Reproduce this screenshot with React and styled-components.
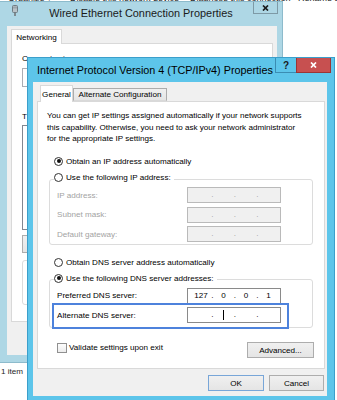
import React from 'react';
import styled, { createGlobalStyle } from 'styled-components';

const UI = '"Liberation Sans", Arial, sans-serif';

const Global = createGlobalStyle`
  html, body { margin: 0; padding: 0; background: #fff; }
  body { font-family: ${UI}; }
  #root { width: 337px; height: 400px; }
  * { box-sizing: border-box; }
`;

const Desktop = styled.div`
  position: relative;
  width: 337px;
  height: 400px;
  overflow: hidden;
  background: #fff;
  font-family: ${UI};
  font-size: 8.1px;
  color: #000;
  display: flex;
  flex-direction: column;
`;

/* ---------- explorer behind ---------- */
const ExplorerToolbar = styled.div`
  display: flex;
  align-items: flex-end;
  height: 4px;
  padding-left: 8px;
  font-size: 9px;
  line-height: 11px;
  color: #1e1e1e;
  white-space: nowrap;
`;
const ToolItem = styled.span`
  flex: none;
  width: ${(p) => (p.$w ? `${p.$w}px` : 'auto')};
`;
const StatusBar = styled.div`
  margin-top: auto;
  height: 34px;
  padding-left: 1px;
  line-height: 12px;
  color: #1e1e1e;
`;

/* ---------- generic parts ---------- */
const Button = styled.div`
  width: ${(p) => p.$w}px;
  height: ${(p) => p.$h || 16}px;
  flex: none;
  display: flex;
  align-items: center;
  justify-content: center;
  background: linear-gradient(#f0f0f0, #e5e5e5);
  border: 1px solid ${(p) => (p.$default ? '#78a6d8' : '#adadad')};
  color: #000;
  white-space: nowrap;
`;

const Tab = styled.div`
  position: relative;
  z-index: ${(p) => (p.$active ? 1 : 0)};
  width: ${(p) => p.$w}px;
  height: ${(p) => p.$h}px;
  margin-bottom: ${(p) => (p.$active ? -1 : 0)}px;
  flex: none;
  display: flex;
  align-items: center;
  justify-content: center;
  background: ${(p) => (p.$active ? '#fff' : 'linear-gradient(#f0f0f0, #e5e5e5)')};
  border: 1px solid ${(p) => (p.$active ? '#d9d9d9' : '#acacac')};
  border-bottom: ${(p) => (p.$active ? 'none' : '1px solid #d9d9d9')};
  white-space: nowrap;
`;

/* ---------- back window ---------- */
const BackWindow = styled.div`
  position: absolute;
  left: -1px;
  top: 1px;
  width: 284px;
  height: 362px;
  border: 1px solid #8dbbcc;
  background: #aed7e5;
  display: flex;
  flex-direction: column;
`;
const BackTitleBar = styled.div`
  height: 24px;
  flex: none;
  display: grid;
  grid-template-columns: 1fr auto 1fr;
  align-items: start;
  padding: 0 4px;
`;
const TitleIcon = styled.svg`
  margin: 3px 0 0 8px;
  display: block;
`;
const BackTitle = styled.div`
  line-height: 22px;
  font-size: 10.9px;
  color: #1a1a1a;
  white-space: nowrap;
`;
const BackClose = styled.div`
  justify-self: end;
  width: 25px;
  height: 12px;
  border: 1px solid #7e9aa6;
  border-top: none;
  display: flex;
  align-items: center;
  justify-content: center;
`;
const BackClient = styled.div`
  margin: 0 5px 0 7px;
  height: 329px;
  flex: none;
  background: #f0f0f0;
  padding: 3px 4px 0 4px;
  display: flex;
  flex-direction: column;
`;
const TabStrip = styled.div`
  display: flex;
  align-items: flex-end;
  height: ${(p) => p.$h}px;
  padding-left: ${(p) => p.$pl || 0}px;
  flex: none;
`;
const BackPanel = styled.div`
  height: 279px;
  flex: none;
  border: 1px solid #d9d9d9;
  background: #fff;
  padding: 8px 10px 0 10px;
  display: flex;
  flex-direction: column;
`;
const Caption = styled.div`
  line-height: 13px;
  margin-top: ${(p) => p.$mt || 0}px;
  white-space: nowrap;
`;
const AdapterBox = styled.div`
  margin-top: 3px;
  height: 19px;
  border: 1px solid #abadb3;
  background: #fff;
`;
const ListBox = styled.div`
  margin-top: 2px;
  height: 105px;
  border: 1px solid #828790;
  background: #fff;
`;
const BackButtonRow = styled.div`
  margin-top: 5px;
  display: flex;
  gap: 6px;
`;
const DescGroup = styled.div`
  margin-top: 7px;
  height: 45px;
  border: 1px solid #dcdcdc;
  border-radius: 3px;
`;
const BackFooter = styled.div`
  margin-top: 8px;
  display: flex;
  justify-content: flex-end;
  gap: 5px;
`;

/* ---------- front window ---------- */
const FrontWindow = styled.div`
  position: absolute;
  left: 27px;
  top: 57px;
  width: 308px;
  height: 352px;
  border: 1px solid #3b9fcb;
  background: #5dc5ea;
  display: flex;
  flex-direction: column;
`;
const TitleBar = styled.div`
  height: 24px;
  flex: none;
  display: flex;
  align-items: flex-start;
  padding: 0 3px 0 7px;
`;
const TitleText = styled.div`
  flex: 1;
  line-height: 24px;
  font-size: 10.8px;
  color: #000;
  text-align: center;
  white-space: nowrap;
`;
const CaptionButton = styled.div`
  width: ${(p) => p.$w}px;
  height: 15px;
  flex: none;
  display: flex;
  align-items: center;
  justify-content: center;
  background: ${(p) => (p.$close ? '#c75050' : 'transparent')};
  border: 1px solid ${(p) => (p.$close ? '#9b3535' : '#3a8db3')};
  border-top: none;
  border-right: ${(p) => (p.$close ? '1px solid #9b3535' : 'none')};
  font-size: 10px;
  font-weight: bold;
  color: #1a1a1a;
`;
const Client = styled.div`
  margin: 0 7px 0 5px;
  height: 314px;
  flex: none;
  background: #f0f0f0;
  padding: 0 2px 0 4px;
  display: flex;
  flex-direction: column;
`;
const TabPage = styled.div`
  height: 268px;
  flex: none;
  border: 1px solid #d9d9d9;
  background: #fff;
  padding: 8px 0 0 9px;
  display: flex;
  flex-direction: column;
`;
const Intro = styled.p`
  margin: 0;
  line-height: 11.5px;
  white-space: nowrap;
`;
const RadioRow = styled.label`
  display: flex;
  align-items: center;
  gap: 3px;
  height: 13px;
  margin: ${(p) => p.$mt || 0}px 0 0 ${(p) => p.$ml || 0}px;
  white-space: nowrap;
`;
const RadioDot = styled.span`
  width: 9px;
  height: 9px;
  flex: none;
  border-radius: 50%;
  border: 1px solid #333;
  background: #fff;
  display: flex;
  align-items: center;
  justify-content: center;
  &::after {
    content: '';
    width: 4px;
    height: 4px;
    border-radius: 50%;
    background: ${(p) => (p.$on ? '#111' : 'transparent')};
  }
`;
const Group = styled.fieldset`
  margin: ${(p) => p.$mt}px 0 0 2px;
  width: 264px;
  min-width: 0;
  border: 1px solid #dcdcdc;
  border-radius: 3px;
  padding: 0 0 ${(p) => p.$pb}px 7px;
`;
const Legend = styled.legend`
  padding: 0 3px 3px 0;
  margin-left: -3px;
`;
const Rows = styled.div`
  display: flex;
  flex-direction: column;
  gap: 3.5px;
`;
const FieldRow = styled.div`
  position: relative;
  display: flex;
  align-items: center;
  justify-content: space-between;
  width: 224px;
  height: 16px;
  color: ${(p) => (p.$disabled ? '#a3a3a3' : '#000')};
  white-space: nowrap;
`;
const IPBox = styled.div`
  width: 94px;
  height: 16px;
  flex: none;
  border: 1px solid ${(p) => (p.$disabled ? '#bababa' : '#8a8a8a')};
  background: ${(p) => (p.$disabled ? '#f0f0f0' : '#fff')};
  color: ${(p) => (p.$disabled ? '#9d9d9d' : '#000')};
  display: flex;
  align-items: center;
  padding-left: 3px;
`;
const Octet = styled.span`
  width: 20px;
  height: 10px;
  flex: none;
  display: flex;
  align-items: center;
  justify-content: center;
  line-height: 10px;
`;
const Dot = styled.span`
  width: 2.5px;
  flex: none;
  text-align: center;
  line-height: 10px;
`;
const Caret = styled.span`
  width: 1px;
  height: 10px;
  background: #000;
`;
const Highlight = styled.div`
  position: absolute;
  left: -5px;
  top: -4px;
  width: 237px;
  height: 26px;
  border: 2px solid #4d82dc;
  pointer-events: none;
`;
const BottomRow = styled.div`
  margin-top: 14px;
  width: 267px;
  padding-left: 10px;
  display: flex;
  justify-content: space-between;
  align-items: flex-start;
`;
const CheckLabel = styled.label`
  display: flex;
  align-items: center;
  gap: 2px;
  height: 11px;
  white-space: nowrap;
`;
const CheckBox = styled.span`
  width: 10px;
  height: 10px;
  flex: none;
  border: 1px solid #909090;
  background: linear-gradient(#fdfdfd, #ececec);
`;
const ButtonRow = styled.div`
  margin-top: 6px;
  display: flex;
  justify-content: flex-end;
  gap: 5px;
  padding-right: 1px;
`;

const CloseGlyph = ({ color }) => (
  <svg width="7" height="6" viewBox="0 0 7 6">
    <path d="M1 0.5 L6 5.5 M6 0.5 L1 5.5" stroke={color} strokeWidth="1.7" />
  </svg>
);

const IP = ({ values = ['', '', '', ''], disabled, caretAt }) => (
  <IPBox $disabled={disabled}>
    {values.map((v, i) => (
      <React.Fragment key={i}>
        {i > 0 && <Dot>.</Dot>}
        <Octet>{caretAt === i ? <Caret /> : v}</Octet>
      </React.Fragment>
    ))}
  </IPBox>
);

export default function App() {
  return (
    <>
      <Global />
      <Desktop>
        <ExplorerToolbar>
          <ToolItem $w={62}>Organize ▾</ToolItem>
          <ToolItem $w={120}>Disable this network device</ToolItem>
          <ToolItem $w={108}>Diagnose this connection</ToolItem>
          <ToolItem>Rename this connection</ToolItem>
        </ExplorerToolbar>
        <StatusBar>1 item</StatusBar>

        <BackWindow>
          <BackTitleBar>
            <TitleIcon width="6" height="11" viewBox="0 0 6 11">
              <rect x="0.5" y="0.5" width="5" height="7" rx="1" fill="#b9c2c7" stroke="#6f7c83" />
              <path d="M2 1.5 V3.5 M4 1.5 V3.5" stroke="#6f7c83" strokeWidth="0.8" />
              <rect x="2" y="8" width="2" height="3" fill="#7d8a90" />
            </TitleIcon>
            <BackTitle>Wired Ethernet Connection Properties</BackTitle>
            <BackClose>
              <CloseGlyph color="#1a1a1a" />
            </BackClose>
          </BackTitleBar>
          <BackClient>
            <TabStrip $h={14}>
              <Tab $active $w={51} $h={15}>Networking</Tab>
            </TabStrip>
            <BackPanel>
              <Caption>Connect using:</Caption>
              <AdapterBox />
              <Caption $mt={23}>T</Caption>
              <ListBox />
              <BackButtonRow>
                <Button $w={70} $h={18} />
                <Button $w={70} $h={18} />
              </BackButtonRow>
              <DescGroup />
            </BackPanel>
            <BackFooter>
              <Button $w={56} />
              <Button $w={56} />
            </BackFooter>
          </BackClient>
        </BackWindow>

        <FrontWindow>
          <TitleBar>
            <TitleText>Internet Protocol Version 4 (TCP/IPv4) Properties</TitleText>
            <CaptionButton $w={21}>?</CaptionButton>
            <CaptionButton $w={35} $close>
              <CloseGlyph color="#fff" />
            </CaptionButton>
          </TitleBar>
          <Client>
            <TabStrip $h={19} $pl={3}>
              <Tab $active $w={33} $h={17}>General</Tab>
              <Tab $w={94} $h={13}>Alternate Configuration</Tab>
            </TabStrip>
            <TabPage>
              <Intro>
                You can get IP settings assigned automatically if your network supports
                <br />
                this capability. Otherwise, you need to ask your network administrator
                <br />
                for the appropriate IP settings.
              </Intro>

              <RadioRow $mt={10} $ml={7}>
                <RadioDot $on />
                Obtain an IP address automatically
              </RadioRow>

              <Group $mt={3.5} $pb={2}>
                <Legend>
                  <RadioRow>
                    <RadioDot />
                    Use the following IP address:
                  </RadioRow>
                </Legend>
                <Rows>
                  <FieldRow $disabled>
                    IP address:
                    <IP disabled />
                  </FieldRow>
                  <FieldRow $disabled>
                    Subnet mask:
                    <IP disabled />
                  </FieldRow>
                  <FieldRow $disabled>
                    Default gateway:
                    <IP disabled />
                  </FieldRow>
                </Rows>
              </Group>

              <RadioRow $mt={10.5} $ml={7}>
                <RadioDot />
                Obtain DNS server address automatically
              </RadioRow>

              <Group $mt={3} $pb={4}>
                <Legend>
                  <RadioRow>
                    <RadioDot $on />
                    Use the following DNS server addresses:
                  </RadioRow>
                </Legend>
                <Rows>
                  <FieldRow>
                    Preferred DNS server:
                    <IP values={['127', '0', '0', '1']} />
                  </FieldRow>
                  <FieldRow>
                    Alternate DNS server:
                    <IP caretAt={1} />
                    <Highlight />
                  </FieldRow>
                </Rows>
              </Group>

              <BottomRow>
                <CheckLabel>
                  <CheckBox />
                  Validate settings upon exit
                </CheckLabel>
                <Button $w={67}>Advanced...</Button>
              </BottomRow>
            </TabPage>
            <ButtonRow>
              <Button $w={56} $default>OK</Button>
              <Button $w={55}>Cancel</Button>
            </ButtonRow>
          </Client>
        </FrontWindow>
      </Desktop>
    </>
  );
}
